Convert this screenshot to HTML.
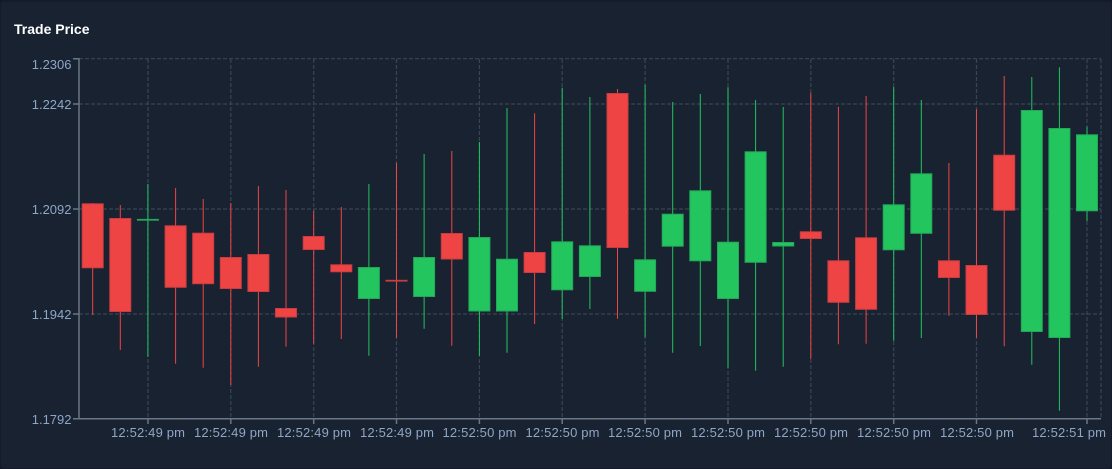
<!DOCTYPE html>
<html><head><meta charset="utf-8"><style>
html,body{margin:0;padding:0;width:1112px;height:469px;overflow:hidden;background:#111827}
.card{position:absolute;left:0;top:0;width:1110px;height:466px;border:1px solid #141c2b;border-top-width:2px;border-radius:4px;background:#182230}
svg{position:absolute;left:0;top:0}
text{font-family:"Liberation Sans",Arial,sans-serif}
.g{stroke:#3a4554;stroke-width:1.2;stroke-dasharray:4 2;fill:none}
.a{stroke:#6b7686;stroke-width:1.5;fill:none}
.l{fill:#8fa6c6;font-size:13px}
.r path{stroke:#ef4444;stroke-width:1;fill:none}
.r rect{fill:#ef4444;stroke:#c93d42;stroke-width:1}
.u path{stroke:#22c55e;stroke-width:1;fill:none}
.u rect{fill:#22c55e;stroke:#22a857;stroke-width:1}
</style></head><body>
<div class="card"></div>
<svg width="1112" height="469" viewBox="0 0 1112 469">
<text x="14" y="34" font-size="14" font-weight="700" fill="#fff">Trade Price</text>
<path class="g" d="M79 58.7H1101M79 104H1101M79 209H1101M79 314H1101"/>
<path class="g" d="M148 59V419M230.8 59V419M313.7 59V419M396.5 59V419M479.4 59V419M562.2 59V419M645.1 59V419M728 59V419M810.8 59V419M893.7 59V419M976.5 59V419M1087 59V419M1101 59V419"/>
<g class="r">
<path d="M92.7 203V315"/><rect x="82.2" y="203.8" width="21" height="64"/>
<path d="M120.3 205V350"/><rect x="109.8" y="218.5" width="21" height="93"/>
<path d="M175.6 188V363.7"/><rect x="165.1" y="225.8" width="21" height="61.5"/>
<path d="M203.2 199V367.7"/><rect x="192.7" y="233.2" width="21" height="50.5"/>
<path d="M230.8 203V385"/><rect x="220.3" y="257.5" width="21" height="31"/>
<path d="M258.4 186V366.7"/><rect x="247.9" y="254.5" width="21" height="37"/>
<path d="M286 190V346.7"/><rect x="275.5" y="308.5" width="21" height="8.5"/>
<path d="M313.7 210.7V343.7"/><rect x="303.2" y="236.5" width="21" height="13"/>
<path d="M341.3 207V339"/><rect x="330.8" y="264.8" width="21" height="7"/>
<path d="M396.5 163V337.7"/><rect x="386" y="280.3" width="21" height=".8"/>
<path d="M451.8 151V345.7"/><rect x="441.3" y="233.5" width="21" height="25.5"/>
<path d="M534.6 113.3V324"/><rect x="524.1" y="252.5" width="21" height="20"/>
<path d="M617.5 89V318.7"/><rect x="607" y="93.5" width="21" height="154"/>
<path d="M810.8 92.7V359"/><rect x="800.3" y="231.8" width="21" height="6.7"/>
<path d="M838.4 106.7V344.3"/><rect x="827.9" y="260.8" width="21" height="41.5"/>
<path d="M866.1 96V343.7"/><rect x="855.6" y="237.8" width="21" height="71.5"/>
<path d="M948.9 163V315.7"/><rect x="938.4" y="260.8" width="21" height="16.7"/>
<path d="M976.5 109.3V337.7"/><rect x="966" y="265.5" width="21" height="49"/>
<path d="M1004.2 76V346.3"/><rect x="993.7" y="155.2" width="21" height="55"/>
</g>
<g class="u">
<path d="M147.9 184V356.7"/><rect x="137.4" y="219.4" width="21" height=".8"/>
<path d="M368.9 184V355.7"/><rect x="358.4" y="267.5" width="21" height="31"/>
<path d="M424.1 154V328.7"/><rect x="413.6" y="257.5" width="21" height="39"/>
<path d="M479.4 142V355.7"/><rect x="468.9" y="237.5" width="21" height="73.5"/>
<path d="M507 108V352.7"/><rect x="496.5" y="259.2" width="21" height="51.8"/>
<path d="M562.2 87.7V319"/><rect x="551.7" y="241.8" width="21" height="48"/>
<path d="M589.9 97V309"/><rect x="579.4" y="245.8" width="21" height="30.7"/>
<path d="M645.1 84.7V337.3"/><rect x="634.6" y="259.8" width="21" height="31.5"/>
<path d="M672.7 102V352.7"/><rect x="662.2" y="214.2" width="21" height="32"/>
<path d="M700.3 94V346"/><rect x="689.8" y="190.8" width="21" height="70"/>
<path d="M728 87.3V367.7"/><rect x="717.5" y="242.2" width="21" height="56.3"/>
<path d="M755.6 100V370.7"/><rect x="745.1" y="151.8" width="21" height="110.5"/>
<path d="M783.2 107V366.7"/><rect x="772.7" y="242.5" width="21" height="3.5"/>
<path d="M893.7 87V340.7"/><rect x="883.2" y="204.8" width="21" height="45"/>
<path d="M921.3 100V338"/><rect x="910.8" y="173.8" width="21" height="59.5"/>
<path d="M1031.8 77V364.7"/><rect x="1021.3" y="110.5" width="21" height="221"/>
<path d="M1059.4 67.3V410.7"/><rect x="1048.9" y="128.5" width="21" height="209"/>
<path d="M1087 126.7V221"/><rect x="1076.5" y="134.8" width="21" height="76"/>
</g>
<path class="a" d="M73 58.7H79V418.7M73 104H79M73 418.7H1101"/>
<path class="a" d="M148 419V424M230.8 419V424M313.7 419V424M396.5 419V424M479.4 419V424M562.2 419V424M645.1 419V424M728 419V424M810.8 419V424M893.7 419V424M976.5 419V424M1087 419V424"/>
<path class="a" d="M73 209H79M73 314H79"/>
<g class="l" text-anchor="end">
<text x="71.5" y="69">1.2306</text>
<text x="71.5" y="109">1.2242</text>
<text x="71.5" y="214">1.2092</text>
<text x="71.5" y="319">1.1942</text>
<text x="71.5" y="424">1.1792</text>
</g>
<g class="l">
<text x="111" y="437" textLength="74">12:52:49 pm</text>
<text x="194" y="437" textLength="74">12:52:49 pm</text>
<text x="277" y="437" textLength="74">12:52:49 pm</text>
<text x="360" y="437" textLength="74">12:52:49 pm</text>
<text x="442.5" y="437" textLength="74">12:52:50 pm</text>
<text x="525.5" y="437" textLength="74">12:52:50 pm</text>
<text x="608" y="437" textLength="74">12:52:50 pm</text>
<text x="691" y="437" textLength="74">12:52:50 pm</text>
<text x="774" y="437" textLength="74">12:52:50 pm</text>
<text x="857" y="437" textLength="74">12:52:50 pm</text>
<text x="940" y="437" textLength="74">12:52:50 pm</text>
<text x="1032" y="437" textLength="74">12:52:51 pm</text>
</g>
</svg>
</body></html>
